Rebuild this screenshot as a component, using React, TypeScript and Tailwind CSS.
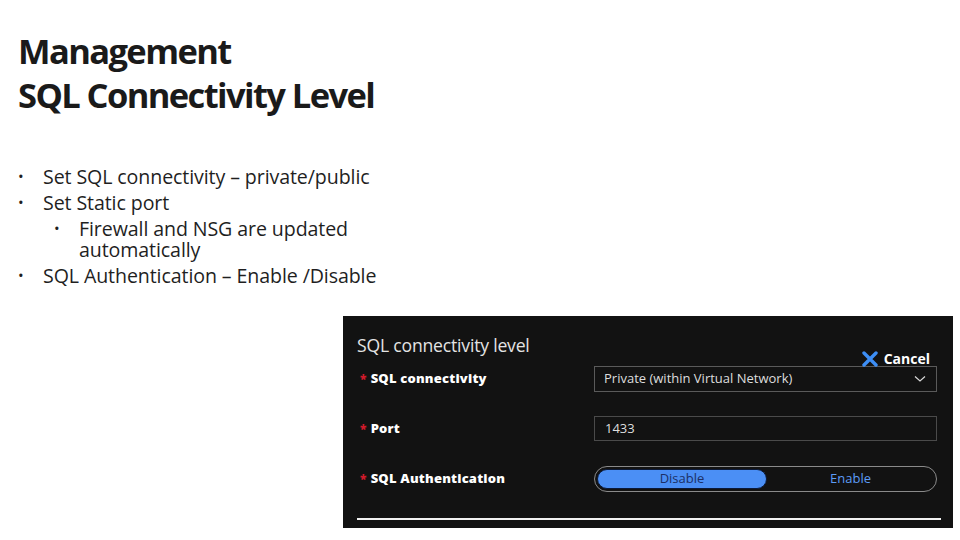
import React from "react";

const bullets = [
  { text: "Set SQL connectivity – private/public", level: 0 },
  { text: "Set Static port", level: 0 },
  { text: "Firewall and NSG are updated automatically", level: 1 },
  { text: "SQL Authentication – Enable /Disable", level: 0 },
];

function Label({ children }: { children: React.ReactNode }) {
  return (
    <div className="flex items-center h-[26px] pl-[3px] text-[13px] font-extrabold text-white tracking-[0.2px]">
      <span className="text-[#d11a2a] mr-[4px] text-[12px]">*</span>
      {children}
    </div>
  );
}

export default function App() {
  return (
    <div
      className="w-[960px] h-[540px] bg-white overflow-hidden pl-[18px] pt-[29px]"
      style={{ fontFamily: '"Open Sans", "Noto Sans", sans-serif' }}
    >
      <h1 className="text-[34.5px] leading-[44px] font-bold text-[#1a1a1a] tracking-[-1.6px]">
        Management
        <br />
        SQL Connectivity Level
      </h1>

      <ul className="mt-[49px] flex flex-col gap-[5px] text-[19.6px] leading-[21px] text-[#1f1f1f] tracking-[-0.1px]">
        {bullets.map((b) => (
          <li key={b.text} className={`flex ${b.level === 1 ? "pl-[36px]" : ""}`}>
            <span className="w-[25px] shrink-0 text-[15px]">•</span>
            <span className={b.level === 1 ? "max-w-[280px]" : ""}>{b.text}</span>
          </li>
        ))}
      </ul>

      <div className="ml-[325px] mt-[30px] w-[610px] h-[212px] bg-[#121212] pl-[14px] pr-[16px]">
        <div className="flex justify-between h-[50px]">
          <div className="pt-[18px] text-[17.6px] leading-[22px] text-[#e4e4e4] tracking-[-0.2px]">
            SQL connectivity level
          </div>
          <div className="self-end flex items-center gap-[6px] pr-[7px] translate-y-[3px]">
            <svg width="16" height="16" viewBox="0 0 16 16">
              <path d="M2 2 L14 14 M14 2 L2 14" stroke="#3d8ef5" strokeWidth="3.4" strokeLinecap="round" />
            </svg>
            <span className="text-[14px] font-bold text-white">Cancel</span>
          </div>
        </div>

        <div className="grid grid-cols-[237px_343px] h-[50px]">
          <Label>SQL connectivity</Label>
          <div className="h-[26px] border border-[#5a5a5a] flex items-center justify-between pl-[9px] pr-[10px] text-[13px] text-[#dedede]">
            <span>Private (within Virtual Network)</span>
            <svg width="12" height="8" viewBox="0 0 12 8">
              <path d="M1 1.5 L6 6 L11 1.5" stroke="#d8d8d8" strokeWidth="1.2" fill="none" />
            </svg>
          </div>
        </div>

        <div className="grid grid-cols-[237px_343px] h-[50px]">
          <Label>Port</Label>
          <div className="h-[25px] border border-[#4a4a4a] flex items-center pl-[10px] text-[13px] text-[#dedede]">
            1433
          </div>
        </div>

        <div className="grid grid-cols-[237px_343px] h-[52px]">
          <Label>SQL Authentication</Label>
          <div className="h-[26px] rounded-full border border-[#8a8a8a] flex items-center p-[2px] text-[13px]">
            <div className="w-[170px] h-[20px] rounded-full bg-[#4b8ff5] border border-[#0b1a3a] flex items-center justify-center text-[#1c2f66]">
              Disable
            </div>
            <div className="flex-1 text-center text-[#5c9cf6]">Enable</div>
          </div>
        </div>

        <div className="w-[584px] h-[2px] bg-[#f2f2f2]" />
      </div>
    </div>
  );
}
